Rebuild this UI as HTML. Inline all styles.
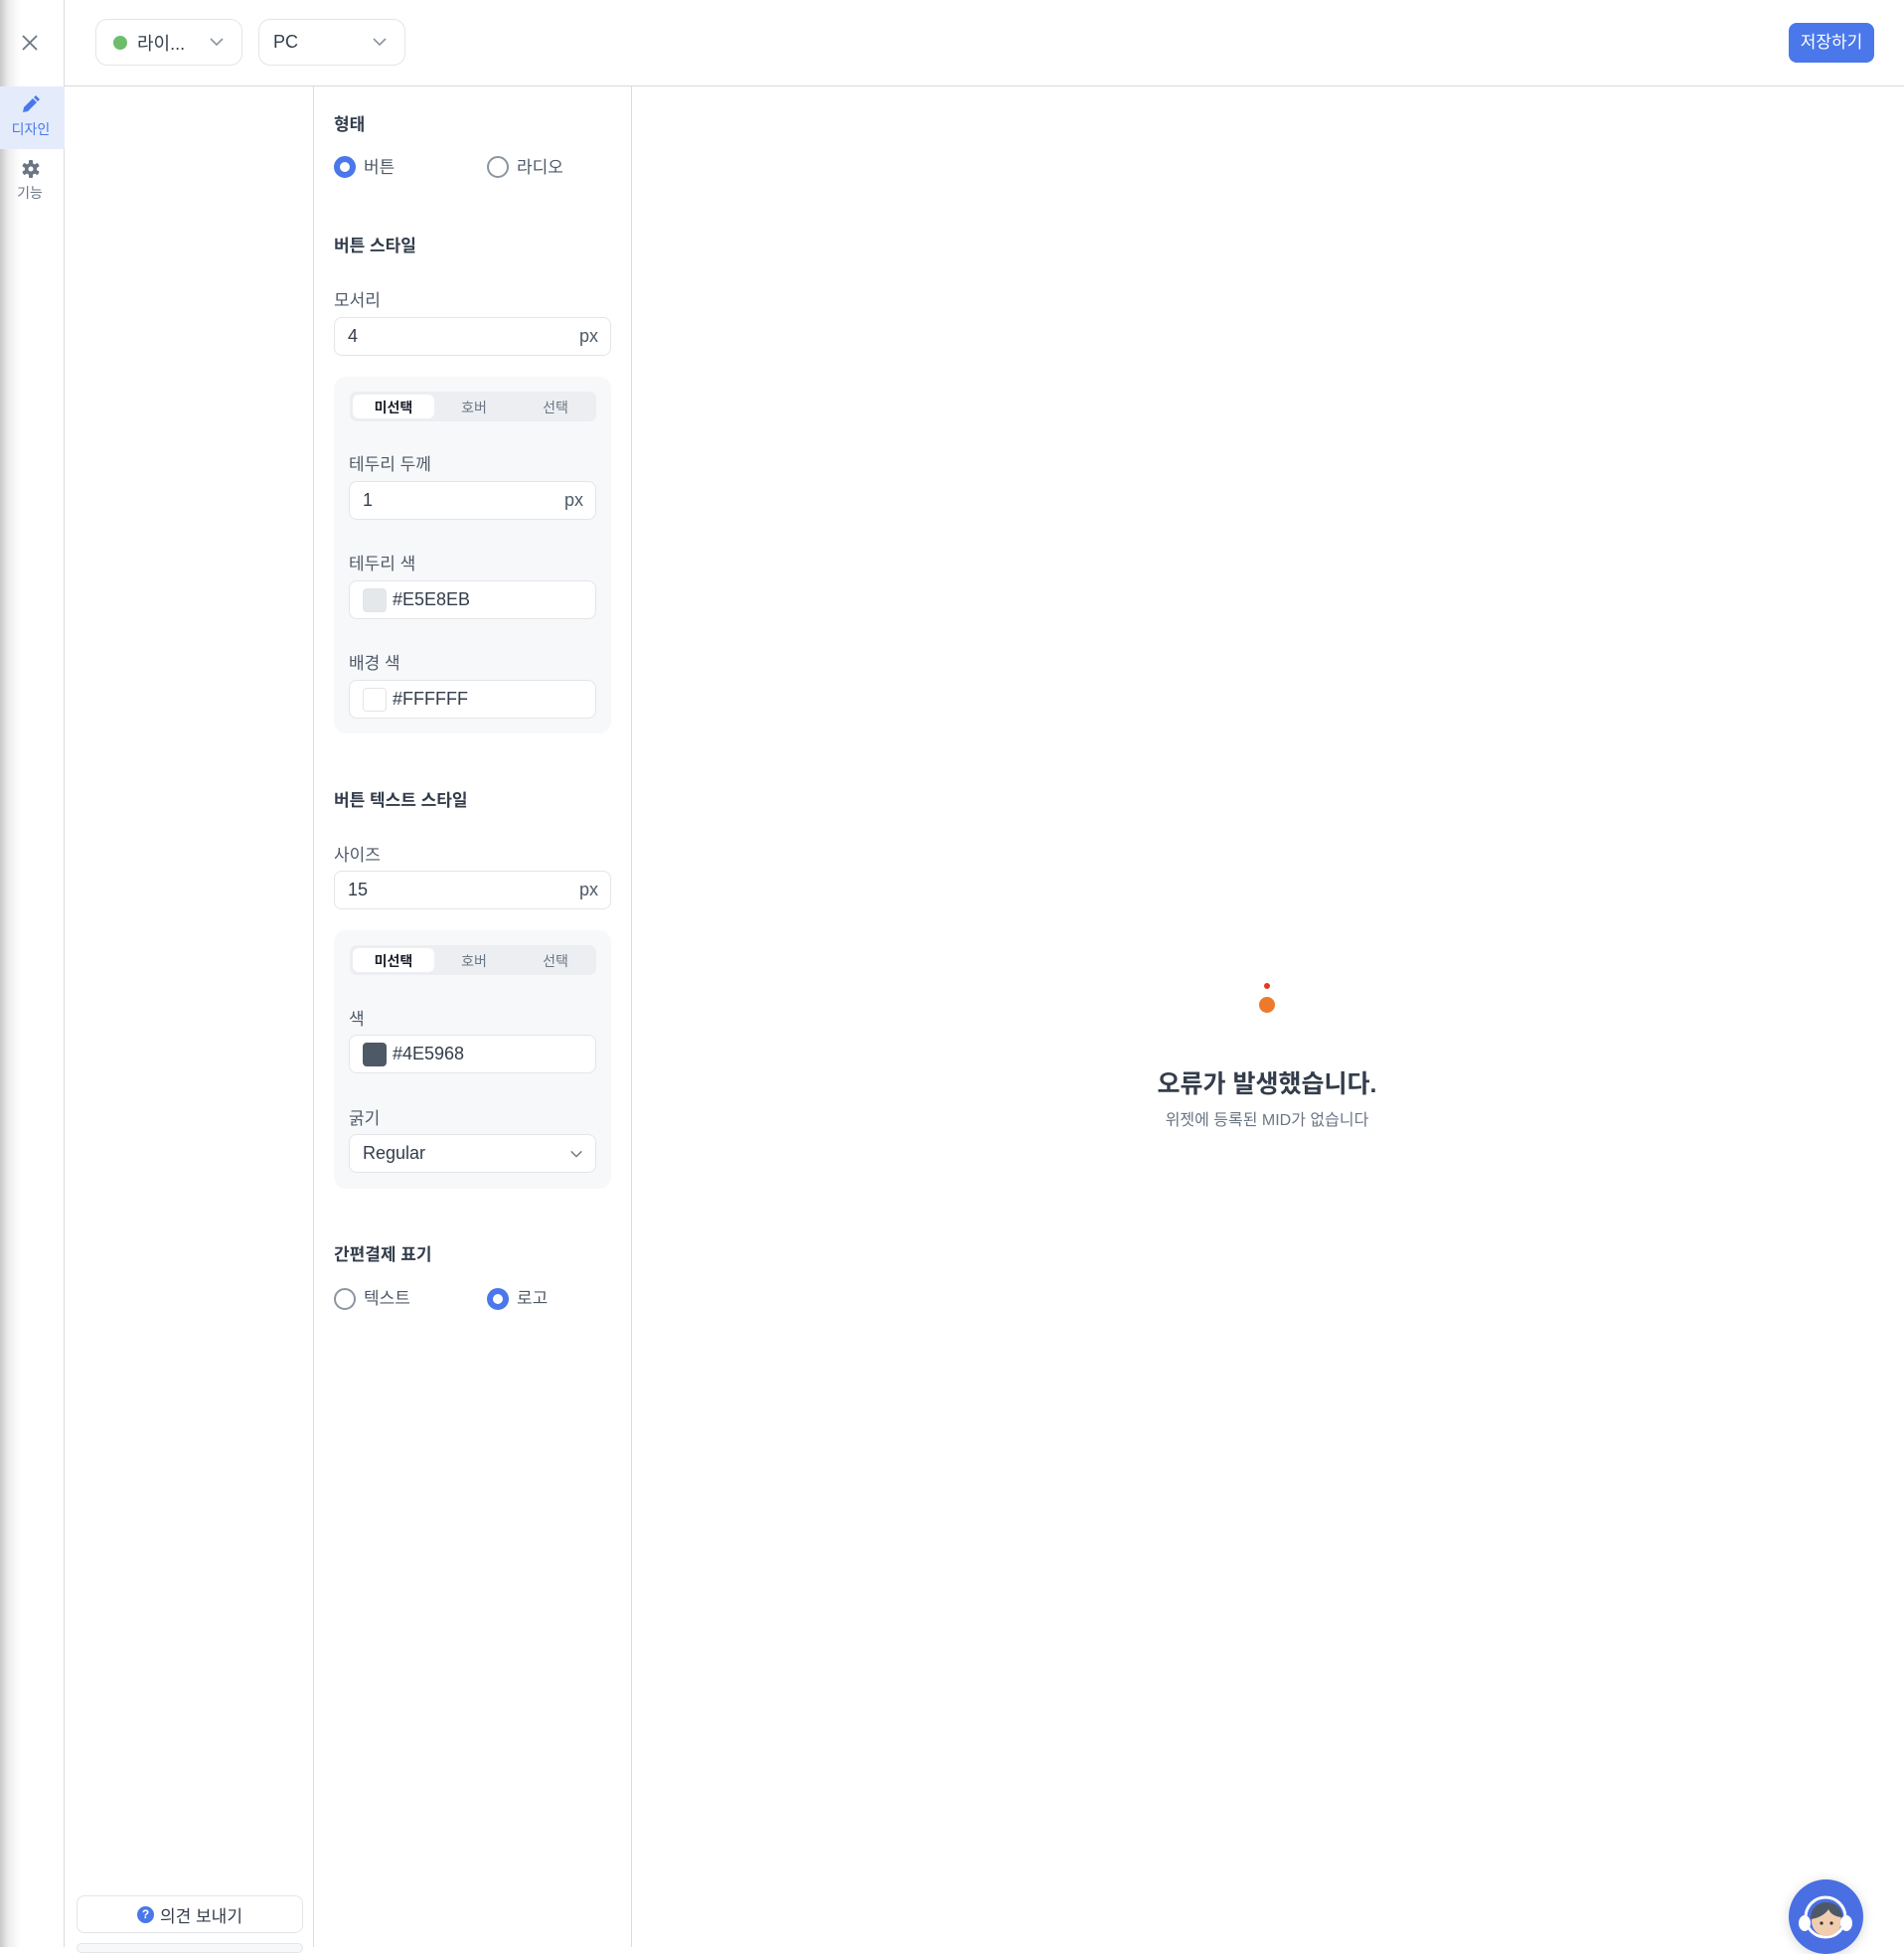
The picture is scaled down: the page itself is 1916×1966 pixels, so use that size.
<!DOCTYPE html>
<html><head><meta charset="utf-8"><style>
*{box-sizing:border-box;margin:0;padding:0}
body{width:1916px;height:1959px;overflow:hidden;background:#fff;font-family:"Liberation Sans","Noto Sans CJK KR",sans-serif;color:#4e5968;position:relative}
.abs{position:absolute}
.rail{left:0;top:0;width:65px;height:1959px;background:linear-gradient(90deg,#c9c9c9 0,#ececec 8px,#fff 20px);border-right:1px solid #dcdcdc}
.hdr{left:65px;top:86px;width:1851px;height:1px;background:#d9d9d9}
.dd{top:19px;height:47px;border:1px solid #e3e5e8;border-radius:12px;font-size:18px;color:#333d4b;display:flex;align-items:center}
.chev{position:absolute;right:17px;top:14px;width:16px;height:16px}
.lbl{position:absolute;left:336px;font-size:17px;color:#4e5968}
.ttl{position:absolute;left:336px;font-size:17px;font-weight:bold;color:#333d4b}
.inp{position:absolute;height:39px;border:1px solid #e3e5e8;border-radius:8px;background:#fff;font-size:18px;color:#333d4b;display:flex;align-items:center;padding-left:13px}
.px{position:absolute;right:12px;top:8px;color:#4e5968}
.box{position:absolute;left:336px;width:279px;background:#f7f8fa;border-radius:12px}
.seg{position:absolute;left:16px;width:248px;height:30px;background:#eceef1;border-radius:7px;font-size:14px;color:#6b7684}
.seg span{position:absolute;top:6px;width:82px;text-align:center}
.seg .on{left:3px;top:3px;height:24px;padding-top:3px;background:#fff;border-radius:6px;color:#191f28;font-weight:bold}
.radio{position:absolute;width:22px;height:22px;border-radius:50%;border:2px solid #8b95a1}
.radio.on{border:6px solid #4a78ea}
.rt{position:absolute;font-size:17px;color:#4e5968}
.sw{width:24px;height:24px;border-radius:4px;margin-right:6px;border:1px solid #e3e5e8}
</style></head><body>
<div class="abs rail"></div>
<svg class="abs" style="left:22px;top:35px" width="16" height="16"><path d="M1 1L15 15M15 1L1 15" stroke="#6b7684" stroke-width="1.8"/></svg>
<div class="abs" style="left:0;top:87px;width:65px;height:63px;background:#e4ecfb"></div>
<svg class="abs" style="left:20px;top:96px" width="22" height="20"><path d="M3 17l1-5 9-9 4 4-9 9z" fill="#4a78ea"/><path d="M14 2l2-2 4 4-2 2z" fill="#4a78ea"/></svg>
<div class="abs" style="left:0;width:62px;text-align:center;top:120px;font-size:14px;color:#4a78ea">디자인</div>
<svg class="abs" style="left:21px;top:160px" width="20" height="20" viewBox="0 0 20 20"><g fill="#6b7684"><circle cx="10" cy="10" r="6"/><rect x="8" y="1" width="4" height="18" rx="1"/><rect x="8" y="1" width="4" height="18" rx="1" transform="rotate(60 10 10)"/><rect x="8" y="1" width="4" height="18" rx="1" transform="rotate(120 10 10)"/></g><circle cx="10" cy="10" r="2.5" fill="#fff"/></svg>
<div class="abs" style="left:0;width:60px;text-align:center;top:184px;font-size:14px;color:#6b7684">기능</div>
<div class="abs hdr"></div>
<div class="abs dd" style="left:96px;width:148px"><span style="width:14px;height:14px;border-radius:50%;background:#6cbe6a;margin:0 10px 0 17px"></span>라이...<svg class="chev" viewBox="0 0 16 16"><path d="M2 5l6 6 6-6" stroke="#8b95a1" stroke-width="1.6" fill="none"/></svg></div>
<div class="abs dd" style="left:260px;width:148px;padding-left:14px">PC<svg class="chev" viewBox="0 0 16 16"><path d="M2 5l6 6 6-6" stroke="#8b95a1" stroke-width="1.6" fill="none"/></svg></div>
<div class="abs" style="left:1800px;top:23px;width:86px;height:40px;background:#4a78ea;border-radius:8px;color:#fff;font-size:17px;text-align:center;line-height:40px">저장하기</div>
<div class="abs" style="left:315px;top:87px;width:1px;height:1872px;background:#dcdcdc"></div>
<div class="abs" style="left:635px;top:87px;width:1px;height:1872px;background:#dcdcdc"></div>

<div class="ttl" style="top:111px">형태</div>
<div class="radio on" style="left:336px;top:157px"></div><div class="rt" style="left:366px;top:154px">버튼</div>
<div class="radio" style="left:490px;top:157px"></div><div class="rt" style="left:520px;top:154px">라디오</div>
<div class="ttl" style="top:233px">버튼 스타일</div>
<div class="lbl" style="top:288px">모서리</div>
<div class="inp" style="left:336px;top:319px;width:279px">4<span class="px">px</span></div>
<div class="box" style="top:379px;height:359px">
 <div class="seg" style="top:15px"><span class="on">미선택</span><span style="left:84px">호버</span><span style="left:166px">선택</span></div>
 <div class="lbl" style="left:15px;top:74px">테두리 두께</div>
 <div class="inp" style="left:15px;top:105px;width:249px">1<span class="px">px</span></div>
 <div class="lbl" style="left:15px;top:174px">테두리 색</div>
 <div class="inp" style="left:15px;top:205px;width:249px"><span class="sw" style="background:#e5e8eb"></span>#E5E8EB</div>
 <div class="lbl" style="left:15px;top:274px">배경 색</div>
 <div class="inp" style="left:15px;top:305px;width:249px"><span class="sw" style="background:#fff"></span>#FFFFFF</div>
</div>
<div class="ttl" style="top:791px">버튼 텍스트 스타일</div>
<div class="lbl" style="top:846px">사이즈</div>
<div class="inp" style="left:336px;top:876px;width:279px">15<span class="px">px</span></div>
<div class="box" style="top:936px;height:260px">
 <div class="seg" style="top:15px"><span class="on">미선택</span><span style="left:84px">호버</span><span style="left:166px">선택</span></div>
 <div class="lbl" style="left:15px;top:75px">색</div>
 <div class="inp" style="left:15px;top:105px;width:249px"><span class="sw" style="background:#4e5968;border-color:#4e5968"></span>#4E5968</div>
 <div class="lbl" style="left:15px;top:175px">굵기</div>
 <div class="inp" style="left:15px;top:205px;width:249px">Regular<svg style="position:absolute;right:12px;top:12px" width="14" height="14" viewBox="0 0 16 16"><path d="M2 5l6 6 6-6" stroke="#6b7684" stroke-width="1.6" fill="none"/></svg></div>
</div>
<div class="ttl" style="top:1248px">간편결제 표기</div>
<div class="radio" style="left:336px;top:1296px"></div><div class="rt" style="left:366px;top:1292px">텍스트</div>
<div class="radio on" style="left:490px;top:1296px"></div><div class="rt" style="left:520px;top:1292px">로고</div>

<div class="abs" style="left:1272px;top:989px;width:6px;height:6px;border-radius:50%;background:#e8381f"></div>
<div class="abs" style="left:1267px;top:1003px;width:16px;height:16px;border-radius:50%;background:#ec7a2a"></div>
<div class="abs" style="left:1000px;width:550px;text-align:center;top:1071px;font-size:25px;font-weight:bold;color:#333d4b">오류가 발생했습니다.</div>
<div class="abs" style="left:1000px;width:550px;text-align:center;top:1113px;font-size:16px;color:#6b7684">위젯에 등록된 MID가 없습니다</div>

<div class="abs" style="left:77px;top:1907px;width:228px;height:38px;border:1px solid #e3e5e8;border-radius:8px;font-size:17px;color:#333d4b;display:flex;align-items:center;justify-content:center"><span style="width:17px;height:17px;border-radius:50%;background:#4a78ea;color:#fff;font-size:12px;font-weight:bold;text-align:center;line-height:17px;margin-right:6px">?</span>의견 보내기</div>
<div class="abs" style="left:77px;top:1955px;width:228px;height:10px;border:1px solid #e3e5e8;border-radius:8px;background:#f7f8fa"></div>
<div class="abs" style="left:1800px;top:1891px;width:75px;height:75px;border-radius:50%;background:#4a6fe3;box-shadow:0 2px 12px rgba(0,0,0,.15);overflow:hidden">
<svg width="75" height="75"><circle cx="37" cy="38" r="20" stroke="#fff" stroke-width="3" fill="none"/><circle cx="38" cy="42" r="15" fill="#f1cdb0"/><path d="M22 40c0-12 8-17 16-17s16 5 16 15c-6 0-12-3-14-8c-3 5-10 9-18 10z" fill="#4e5968"/><circle cx="33" cy="44" r="1.6" fill="#333"/><circle cx="43" cy="44" r="1.6" fill="#333"/><ellipse cx="16" cy="44" rx="6" ry="8" fill="#fff"/><ellipse cx="58" cy="44" rx="6" ry="8" fill="#fff"/></svg></div>
</body></html>
